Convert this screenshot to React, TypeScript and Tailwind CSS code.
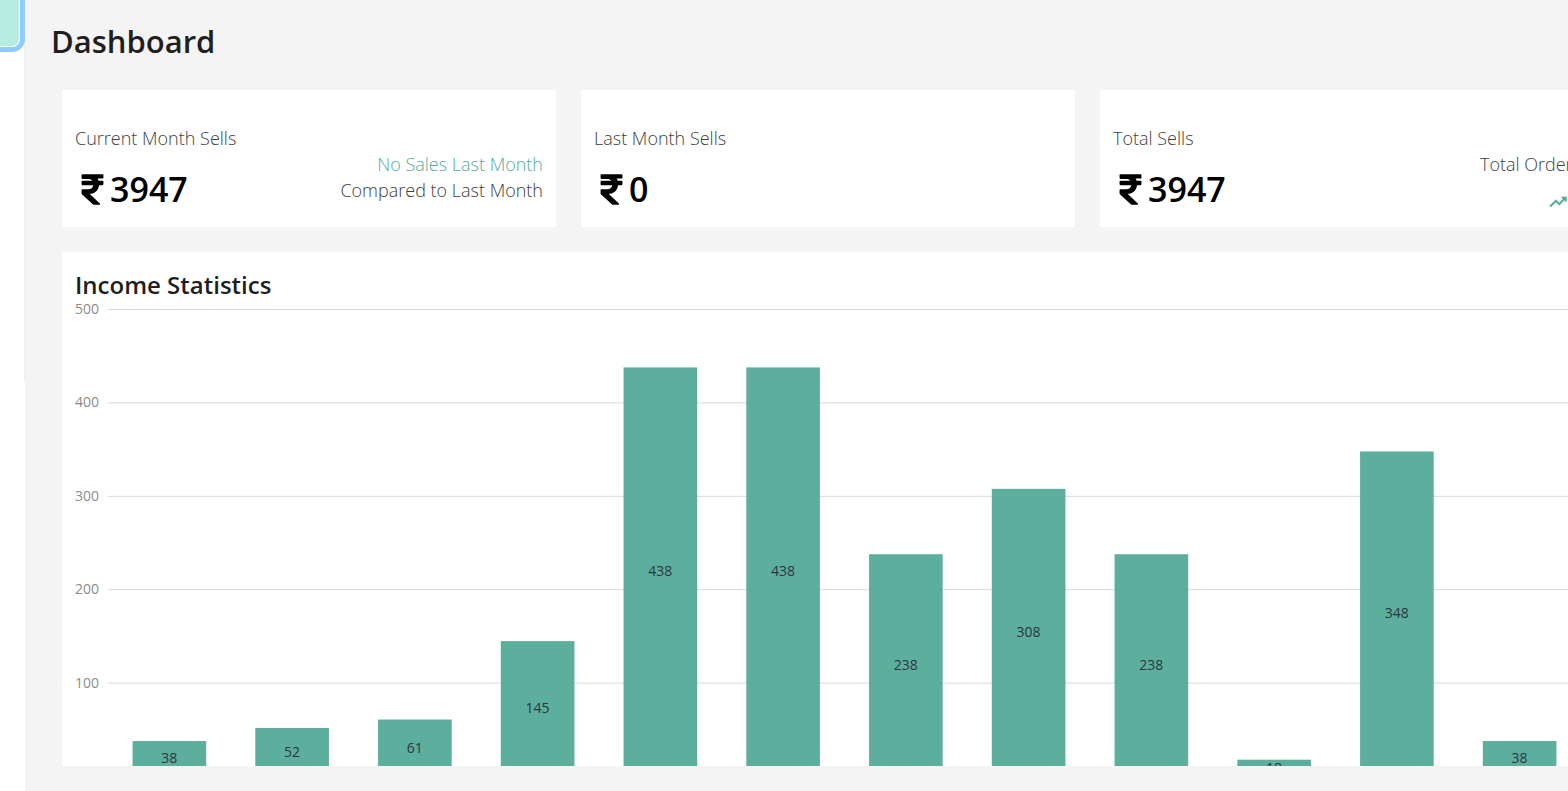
import type { ReactNode } from "react";
import { FaRupeeSign } from "react-icons/fa";

const AXIS_MAX = 500;
const ZERO_Y = 467;
const TICKS = [500, 400, 300, 200, 100];
const INCOME = [38, 52, 61, 145, 438, 438, 238, 308, 238, 18, 348, 38];

const toY = (value: number) => ZERO_Y - (value / AXIS_MAX) * ZERO_Y;

function TrendingUpIcon() {
  return (
    <svg viewBox="0 0 24 24" className="size-5 fill-[#54ab98] stroke-[#54ab98]" strokeWidth="0.7" aria-hidden="true">
      <path d="m16 6 2.29 2.29-4.88 4.88-4-4L2 16.59 3.41 18l6-6 4 4 6.3-6.29L22 12V6z" />
    </svg>
  );
}

function StatCard({ label, amount, children }: { label: string; amount: number; children?: ReactNode }) {
  return (
    <section className="flex h-[137px] justify-between bg-white p-[13px] pt-[35px]">
      <div>
        <h2 className="font-light leading-[26px]">{label}</h2>
        <p className="mt-3 flex items-center text-[34px] leading-[52px] font-semibold text-black">
          <FaRupeeSign className="size-[35px]" aria-hidden="true" />
          {amount}
        </p>
      </div>
      <div className="pt-[26px] text-right font-light leading-[26px]">{children}</div>
    </section>
  );
}

function IncomeChart() {
  return (
    <div className="flex h-[480px] pt-2">
      <div className="w-[33px] shrink-0">
        <svg className="h-[467px] w-6 overflow-visible">
          {TICKS.map((tick) => (
            <text key={tick} x="24" y={toY(tick) + 5} textAnchor="end" className="fill-[#8c8c8c] text-sm">
              {tick}
            </text>
          ))}
        </svg>
      </div>
      <svg className="h-[467px] min-w-0 flex-1 overflow-visible" role="img" aria-label="Income Statistics">
        {TICKS.map((tick) => (
          <line key={tick} x1="0" x2="100%" y1={toY(tick) + 0.5} y2={toY(tick) + 0.5} className="stroke-[#d9d9d9]" />
        ))}
        {INCOME.map((value, index) => (
          <g key={index}>
            <rect
              x={`${((index + 0.2) / 12) * 100}%`}
              y={toY(value) + 0.5}
              width="5%"
              height={ZERO_Y - toY(value)}
              className="fill-[#54ab98]"
              fillOpacity="0.95"
            />
            <text
              x={`${((index + 0.5) / 12) * 100}%`}
              y={(toY(value) + ZERO_Y) / 2 + 5}
              textAnchor="middle"
              className="fill-[#2c3542] text-sm"
            >
              {value}
            </text>
          </g>
        ))}
      </svg>
    </div>
  );
}

export default function App() {
  return (
    <div className="flex h-screen overflow-hidden bg-[#f4f4f4] font-['Open_Sans','Noto_Sans',sans-serif] text-lg text-[#404040]">
      <aside className="w-[25px] shrink-0 bg-white">
        <div className="h-[381px] border-r border-[#f0f0f0]">
          <button
            type="button"
            aria-label="Dashboard"
            className="-ml-5 block h-[47px] w-10 rounded-br-lg border-r border-b border-white bg-[#b7ece1] ring-[5px] ring-[#91caff]"
          />
        </div>
      </aside>
      <main className="flex min-w-0 flex-1 flex-col pb-[25px] pl-[26px]">
        <h1 className="pt-[18px] text-[31px] leading-[46px] font-semibold text-[#1f1f1f]">Dashboard</h1>
        <div className="-mr-[26px] ml-[11px] flex min-h-0 flex-1 flex-col gap-[25px] pt-[26px]">
          <div className="grid shrink-0 grid-cols-3 gap-[25px]">
            <StatCard label="Current Month Sells" amount={3947}>
              <p className="text-[#54ab98]">No Sales Last Month</p>
              <p>Compared to Last Month</p>
            </StatCard>
            <StatCard label="Last Month Sells" amount={0} />
            <StatCard label="Total Sells" amount={3947}>
              <p>Total Orders</p>
              <p className="flex justify-end pt-[15px] pr-[13px]">
                <TrendingUpIcon />
              </p>
            </StatCard>
          </div>
          <section className="min-h-0 flex-1 overflow-hidden bg-white px-[13px] pt-[17px]">
            <h2 className="text-2xl leading-8 font-semibold text-[#1f1f1f]">Income Statistics</h2>
            <IncomeChart />
          </section>
        </div>
      </main>
    </div>
  );
}
